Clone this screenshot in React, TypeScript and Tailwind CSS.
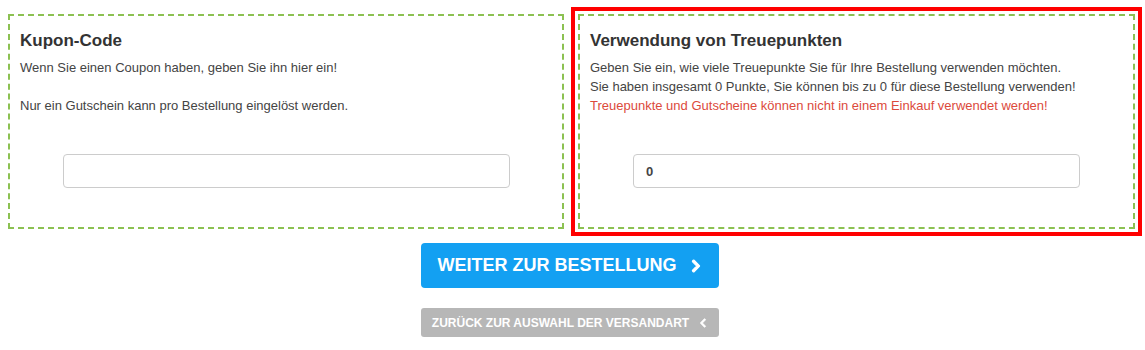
import * as React from "react";
import { FaChevronLeft, FaChevronRight } from "react-icons/fa";

function Box({
  title,
  children,
  value,
  highlight,
}: {
  title: string;
  children: React.ReactNode;
  value: string;
  highlight?: boolean;
}) {
  return (
    <div
      className={
        "flex h-[215px] flex-col border-2 border-dashed border-[#8cc152] px-[10px] pt-[14px] " +
        (highlight
          ? "w-[557px] outline-4 outline-[#ff0000] outline-offset-[3px]"
          : "w-[556px]")
      }
    >
      <h3 className="text-[17px] font-bold leading-[22px] text-[#333]">{title}</h3>
      <div className="mt-[6px] h-[57px] text-[13px] leading-[19px] text-[#444]">
        {children}
      </div>
      <div className="mt-[39px] flex justify-center">
        <input
          readOnly
          value={value}
          className="h-[34px] w-[447px] rounded-[4px] border border-[#cccccc] bg-white px-3 text-[13px] font-bold text-[#444] outline-none"
        />
      </div>
    </div>
  );
}

export default function App() {
  return (
    <div className="h-[350px] w-[1145px] bg-white font-['Liberation_Sans',Arial,sans-serif]">
      <div className="flex gap-[14px] pl-2 pt-[14px]">
        <Box title="Kupon-Code" value="">
          <p>Wenn Sie einen Coupon haben, geben Sie ihn hier ein!</p>
          <p className="mt-[19px]">
            Nur ein Gutschein kann pro Bestellung eingelöst werden.
          </p>
        </Box>
        <Box title="Verwendung von Treuepunkten" value="0" highlight>
          <p>
            Geben Sie ein, wie viele Treuepunkte Sie für Ihre Bestellung verwenden
            möchten.
          </p>
          <p>
            Sie haben insgesamt 0 Punkte, Sie können bis zu 0 für diese Bestellung
            verwenden!
          </p>
          <p className="text-[#dc4a3c]">
            Treuepunkte und Gutscheine können nicht in einem Einkauf verwendet werden!
          </p>
        </Box>
      </div>

      <div className="mt-[14px] flex w-[1140px] flex-col items-center gap-[20px]">
        <button className="flex h-[45px] w-[298px] items-center justify-center gap-[12px] rounded-[4px] bg-[#13a0f2] text-[18px] font-bold uppercase text-white">
          Weiter zur Bestellung
          <FaChevronRight
            className="h-[14px] w-[14px]"
            stroke="currentColor"
            strokeWidth={40}
          />
        </button>
        <button className="flex h-[29px] w-[298px] items-center justify-center gap-[9px] rounded-[3px] bg-[#b7b7b7] text-[12px] font-bold uppercase text-white">
          Zurück zur Auswahl der Versandart
          <FaChevronLeft
            className="h-[10px] w-[10px]"
            stroke="currentColor"
            strokeWidth={40}
          />
        </button>
      </div>
    </div>
  );
}
